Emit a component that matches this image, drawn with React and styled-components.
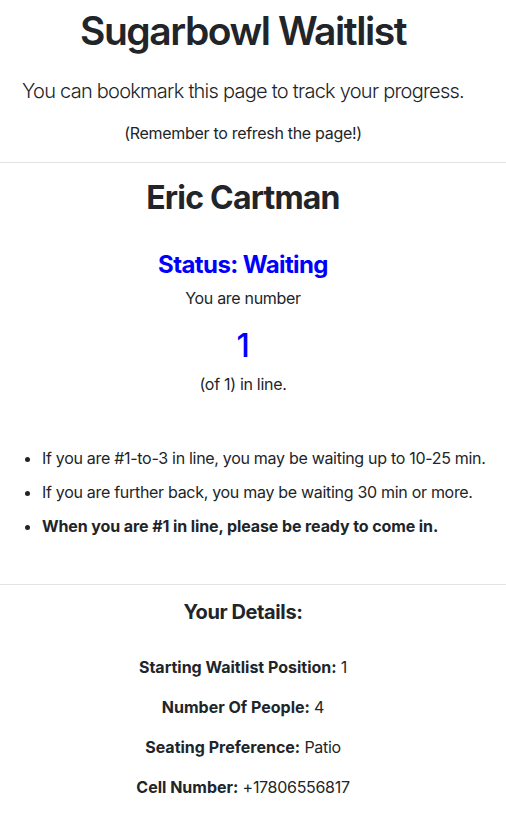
import React from 'react';
import styled, { createGlobalStyle } from 'styled-components';

const GlobalStyle = createGlobalStyle`
  * { box-sizing: border-box; }
  body {
    margin: 0;
    padding-top: 8px;
    background: #fff;
    color: #212529;
    font-family: Inter, "Noto Sans", sans-serif;
    font-size: 16px;
    line-height: 1.5;
    letter-spacing: -0.3px;
  }
`;

const Section = styled.section`
  padding: 0 30px 0 10px;
  text-align: center;
`;

const Title = styled.h1`
  margin: 0;
  font-size: 39px;
  font-weight: 600;
  line-height: 1.2;
  letter-spacing: -1.45px;
`;

const Lead = styled.p`
  margin: 21px 0 0;
  font-size: 20px;
  font-weight: 300;
  letter-spacing: -0.75px;
  white-space: nowrap;
`;

const Note = styled.p`
  margin: 15px 0 0;
`;

const Rule = styled.hr`
  margin: ${(p) => p.$top}px 0 0;
  border: 0;
  border-top: 1px solid #e3e3e3;
`;

const Name = styled.h2`
  margin: 16px 0 0;
  font-size: 32px;
  font-weight: 700;
  line-height: 1.2;
  letter-spacing: -0.8px;
`;

const Status = styled.h3`
  margin: 34px 0 0;
  font-size: 24px;
  font-weight: 700;
  line-height: 1.2;
  letter-spacing: -0.6px;
  color: #0000ff;
`;

const Line = styled.p`
  margin: ${(p) => p.$top}px 0 0;
`;

const Position = styled.div`
  margin-top: 17px;
  font-size: 32px;
  font-weight: 500;
  line-height: 1.2;
  color: #0000ff;
`;

const Tips = styled.ul`
  margin: 50px -20px 0 0;
  padding-left: 32px;
  text-align: left;
`;

const Tip = styled.li`
  margin-top: ${(p) => (p.$first ? 0 : 10)}px;
  font-weight: ${(p) => (p.$strong ? 700 : 400)};
  letter-spacing: ${(p) => (p.$strong ? -0.1 : -0.3)}px;
  white-space: nowrap;
`;

const DetailsTitle = styled.h5`
  margin: 15px 0 0;
  font-size: 20px;
  font-weight: 700;
  line-height: 1.2;
  letter-spacing: -0.4px;
`;

const Details = styled.div`
  margin-top: 31px;
  display: flex;
  flex-direction: column;
  gap: 16px;
`;

const Detail = styled.p`
  margin: 0;
  b {
    font-weight: 700;
    letter-spacing: 0;
  }
`;

const details = [
  ['Starting Waitlist Position', '1'],
  ['Number Of People', '4'],
  ['Seating Preference', 'Patio'],
  ['Cell Number', '+17806556817'],
];

export default function App() {
  return (
    <>
      <GlobalStyle />
      <Section>
        <Title>Sugarbowl Waitlist</Title>
        <Lead>You can bookmark this page to track your progress.</Lead>
        <Note>(Remember to refresh the page!)</Note>
      </Section>
      <Rule $top={17} />
      <Section>
        <Name>Eric Cartman</Name>
        <Status>Status: Waiting</Status>
        <Line $top={6}>You are number</Line>
        <Position>1</Position>
        <Line $top={7}>(of 1) in line.</Line>
        <Tips>
          <Tip $first>If you are #1-to-3 in line, you may be waiting up to 10-25 min.</Tip>
          <Tip>If you are further back, you may be waiting 30 min or more.</Tip>
          <Tip $strong>When you are #1 in line, please be ready to come in.</Tip>
        </Tips>
      </Section>
      <Rule $top={46} />
      <Section>
        <DetailsTitle>Your Details:</DetailsTitle>
        <Details>
          {details.map(([label, value]) => (
            <Detail key={label}>
              <b>{label}:</b> {value}
            </Detail>
          ))}
        </Details>
      </Section>
    </>
  );
}
